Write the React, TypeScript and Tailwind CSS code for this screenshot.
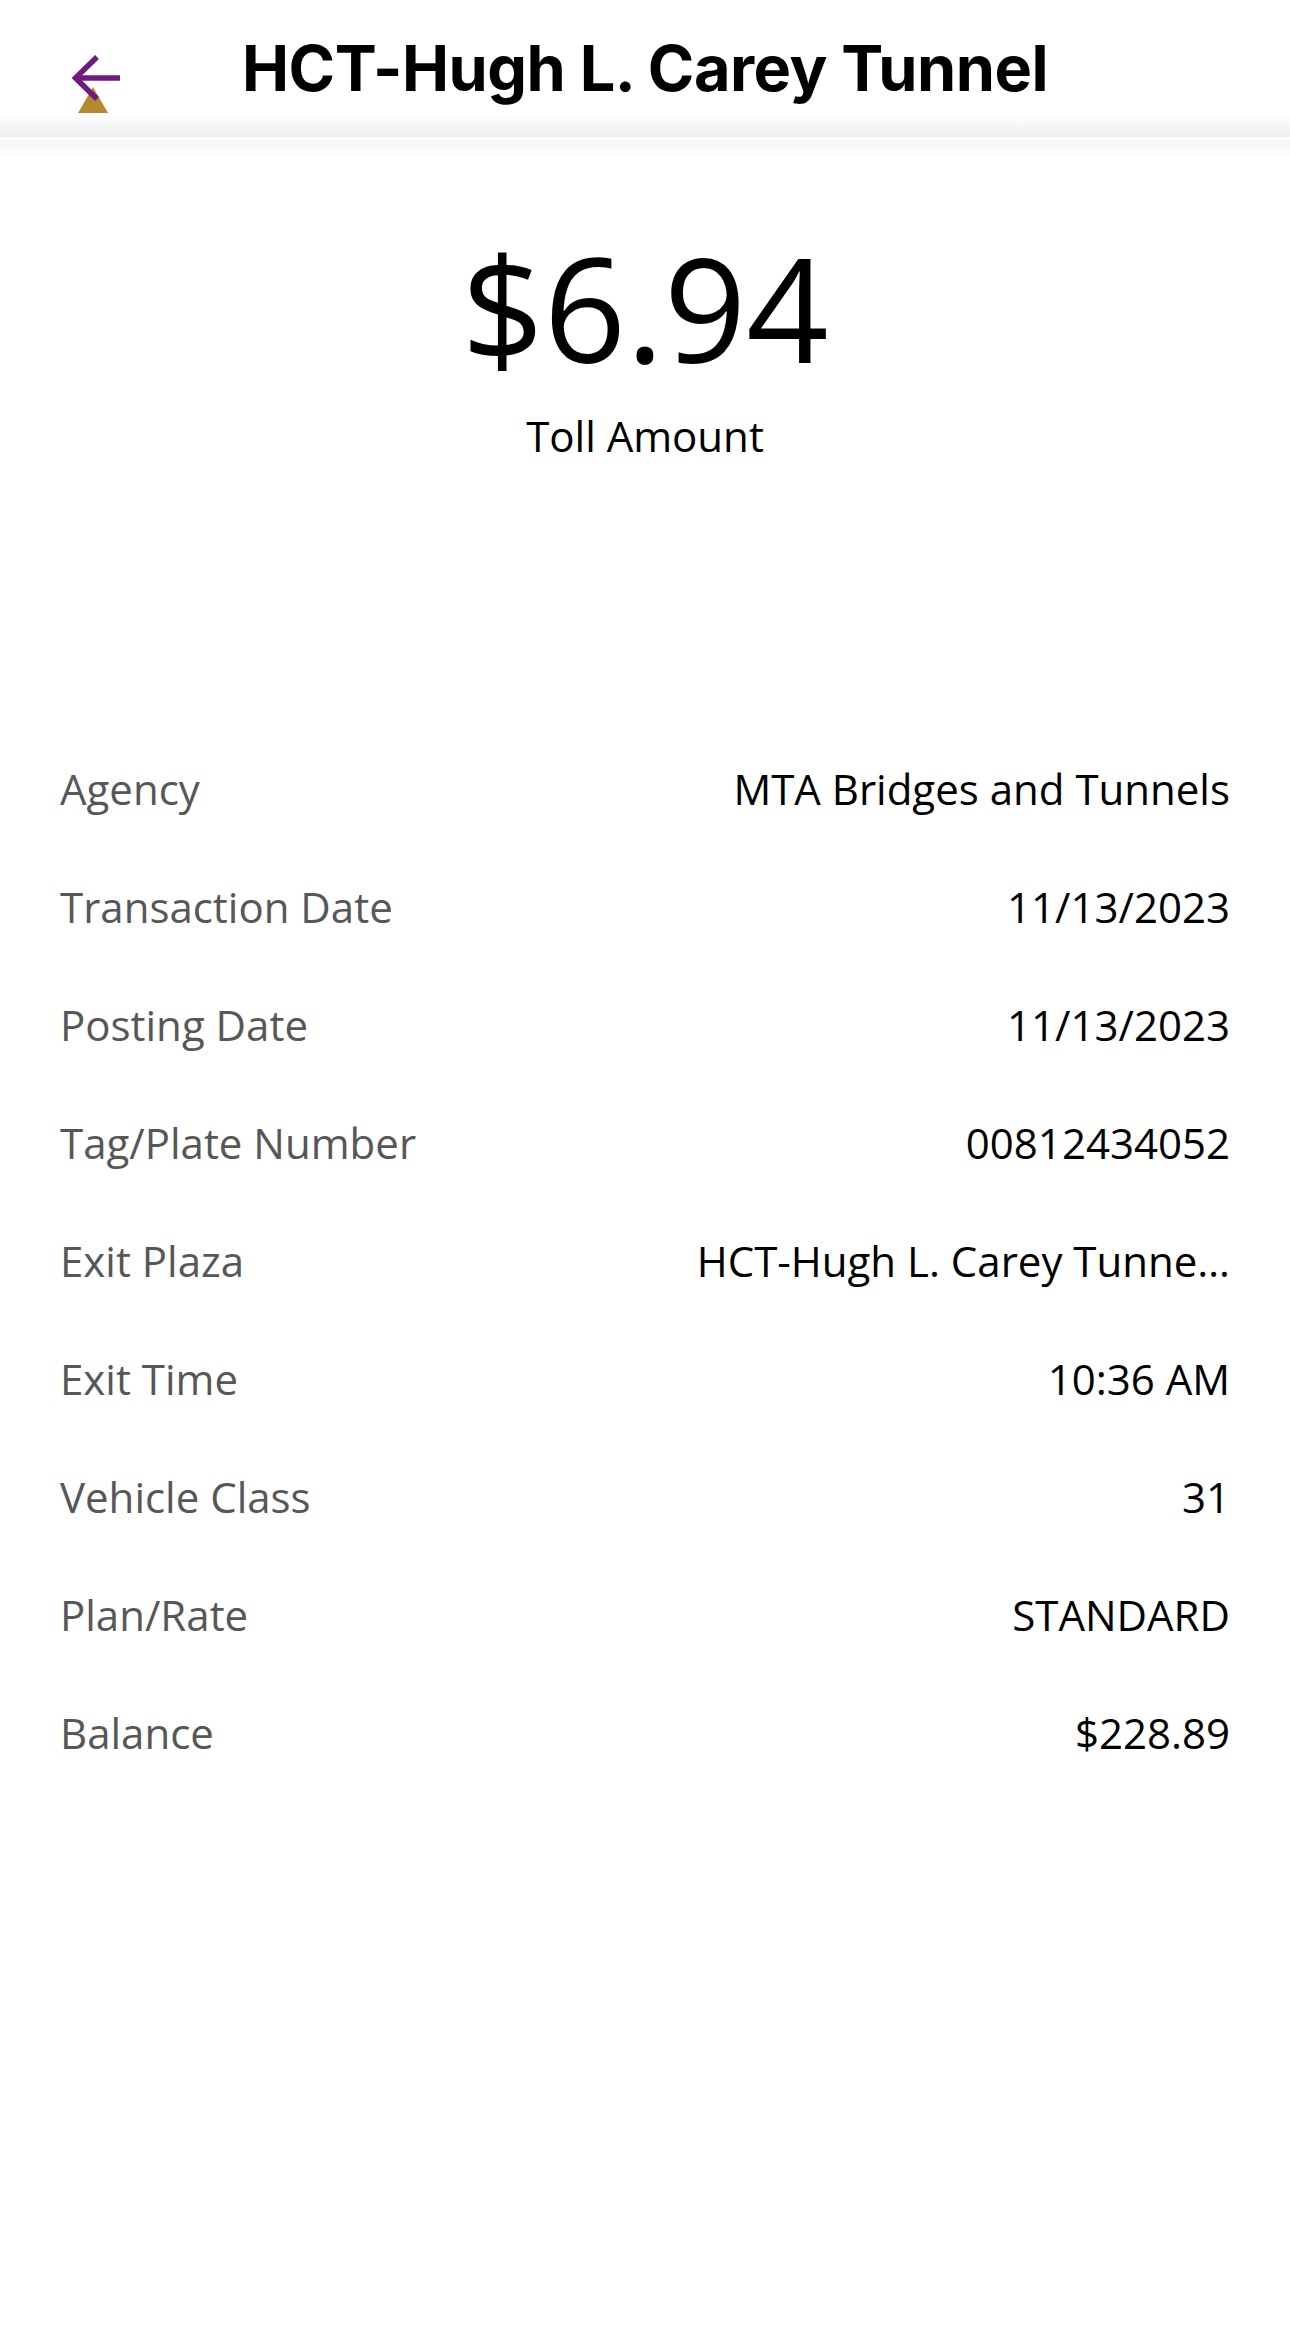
import React from "react";

const rows: [string, string][] = [
  ["Agency", "MTA Bridges and Tunnels"],
  ["Transaction Date", "11/13/2023"],
  ["Posting Date", "11/13/2023"],
  ["Tag/Plate Number", "00812434052"],
  ["Exit Plaza", "HCT-Hugh L. Carey Tunne…"],
  ["Exit Time", "10:36 AM"],
  ["Vehicle Class", "31"],
  ["Plan/Rate", "STANDARD"],
  ["Balance", "$228.89"],
];

export default function App() {
  return (
    <div className="w-[1290px] min-h-[2344px] bg-white" style={{ fontFamily: '"Open Sans", sans-serif' }}>
      <header className="relative">
        <div className="h-[113px] flex justify-center pt-[36px]">
          <h1
            className="text-[63px] leading-[64px] font-bold text-black tracking-[-0.5px]"
            style={{ fontFamily: 'Inter, "Liberation Sans", sans-serif' }}
          >
            HCT-Hugh L. Carey Tunnel
          </h1>
        </div>
        <div className="h-[24px] bg-gradient-to-b from-white to-[#efefef]" />
        <div className="h-[3px] bg-white" />
        <div className="h-[20px] bg-gradient-to-b from-[#f6f6f6] to-white" />
        <svg className="absolute left-0 top-0" width="140" height="113" viewBox="0 0 140 113">
          <polygon points="93,87 78,113 108,113" fill="#B38B2F" />
          <path d="M120 78 H77" stroke="#6E1A80" strokeWidth="5.5" fill="none" />
          <path d="M97 57 L75.5 78 L97 99" stroke="#6E1A80" strokeWidth="5.5" fill="none" strokeLinejoin="miter" />
        </svg>
      </header>

      <section className="flex flex-col items-center pt-[75px]">
        <div className="text-[144px] leading-[144px] text-black">$6.94</div>
        <div className="mt-[36px] text-[42px] leading-[42px] text-black">Toll Amount</div>
      </section>

      <section className="mt-[273px] px-[60px]">
        {rows.map(([label, value]) => (
          <div key={label} className="h-[118px] flex items-center justify-between gap-[40px]">
            <span className="text-[42px] leading-[58px] text-[#575757] whitespace-nowrap">{label}</span>
            <span className="text-[42px] leading-[58px] text-black whitespace-nowrap text-right">{value}</span>
          </div>
        ))}
      </section>
    </div>
  );
}
